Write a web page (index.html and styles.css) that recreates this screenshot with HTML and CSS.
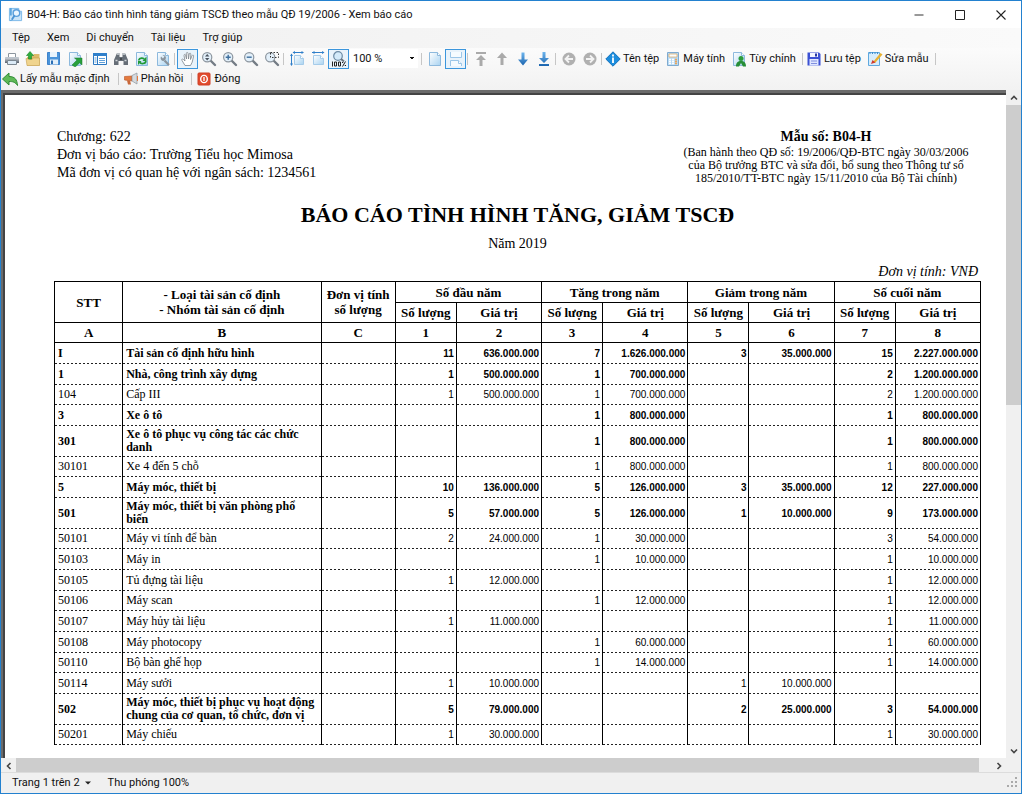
FILE: index.html
```html
<!DOCTYPE html>
<html lang="vi">
<head>
<meta charset="utf-8">
<title>B04-H: Báo cáo tình hình tăng giảm TSCĐ</title>
<link rel="stylesheet" href="styles.css">
</head>
<body>
<svg class="defs" width="0" height="0" aria-hidden="true">
  <defs>
    <linearGradient id="paper" x1="0" y1="0" x2="1" y2="1"><stop offset="0" stop-color="#fff"/><stop offset="1" stop-color="#a9d3f1"/></linearGradient>
    <linearGradient id="blue" x1="0" y1="0" x2="0" y2="1"><stop offset="0" stop-color="#6db5ee"/><stop offset="1" stop-color="#1b64ae"/></linearGradient>
    <linearGradient id="metal" x1="0" y1="0" x2="0" y2="1"><stop offset="0" stop-color="#dfe3e8"/><stop offset="1" stop-color="#59626d"/></linearGradient>
    <symbol id="page" viewBox="0 0 16 16"><path d="M2.500 1.500h8l3 3v10h-11z" fill="url(#paper)" stroke="#8db9dd"/><path d="M10.500 1.500v3h3" fill="#fff" stroke="#8db9dd"/></symbol>
    <symbol id="lens" viewBox="0 0 16 16"><path d="M9.500 9.500l4.500 4.500" stroke="#747c85" stroke-width="2.400" stroke-linecap="round"/><circle cx="6.200" cy="6.200" r="4.600" fill="#e3f0fa" stroke="#8d969f" stroke-width="1.200"/></symbol>
    <symbol id="round" viewBox="0 0 16 16"><circle cx="8" cy="8" r="6.500" fill="#b0b0b0"/><path d="M12 8H5M8 4.500L4.500 8 8 11.500" fill="none" stroke="#f3f3f3" stroke-width="1.800"/></symbol>
  </defs>
</svg>
<div class="window">
  <header class="titlebar">
    <svg class="app-icon" viewBox="0 0 16 16"><path d="M1.500 1.500h10v3h3v10h-13z" fill="#c9e4f8" stroke="#7ab8e8"/><path d="M3 1v8M3 14v1" stroke="#5aa5df" stroke-width="2"/><circle cx="9" cy="6.500" r="3.500" fill="#e9f6ff" stroke="#5a9fdc" stroke-width="1.500"/><path d="M7 9l-3 4.500" stroke="#4a94d4" stroke-width="2"/></svg>
    <h1 class="title">B04-H: Báo cáo tình hình tăng giảm TSCĐ theo mẫu QĐ 19/2006 - Xem báo cáo</h1>
    <div class="controls">
      <button aria-label="Thu nhỏ"><svg viewBox="0 0 12 12"><path d="M1.500 6h9" stroke="#333"/></svg></button>
      <button aria-label="Phóng to"><svg viewBox="0 0 12 12"><path d="M1.500 1.500h9v9h-9z" fill="none" stroke="#222"/></svg></button>
      <button aria-label="Đóng cửa sổ"><svg viewBox="0 0 12 12"><path d="M1.500 1.500l9 9M10.500 1.500l-9 9" stroke="#222" stroke-width="1.100"/></svg></button>
    </div>
  </header>
  <nav class="menu">
    <button>Tệp</button><button>Xem</button><button>Di chuyển</button><button>Tài liệu</button><button>Trợ giúp</button>
  </nav>
  <div class="tools">
    <div class="toolbar">
      <button class="tool" aria-label="In"><svg viewBox="0 0 16 16"><path d="M4.500 2.500h7v4h-7z" fill="#fff" stroke="#8d969f"/><path d="M1 6h14v6H1z" fill="url(#metal)"/><path d="M1.500 6.500h13" stroke="#bcc5cd"/><path d="M3.500 9.500h9v4h-9z" fill="#dcebf7" stroke="#7b8791"/></svg></button>
      <button class="tool" aria-label="Mở"><svg viewBox="0 0 16 16"><path d="M2 6l5-1 2-2h5.500v11.500H2z" fill="#dcbb6a"/><path d="M1 7.500l6 1 1-1.500h6.500v7.500H2z" fill="#f0d48d" stroke="#c49d4a" stroke-width=".6"/><path d="M3.500 8V4.500H1.500L5 .5l3.500 4h-2V8z" fill="#2fae3a" stroke="#168325" stroke-width=".6"/></svg></button>
      <button class="tool" aria-label="Lưu"><svg viewBox="0 0 16 16"><path d="M1.500 1.500h12v12h-12z" fill="#4a94da" stroke="#3f83cc"/><path d="M4 1h7v5H4z" fill="#e8f3fc"/><path d="M4 8.500h8v5H4z" fill="#e3eff9"/><path d="M5 9.500h2v3.500H5z" fill="#2c6fb5"/></svg></button>
      <button class="tool" aria-label="Xuất"><svg viewBox="0 0 16 16"><use href="#page"/><path d="M5 14l5-5-2.500-2H15v7l-2.300-2.300-4.500 4.300z" fill="#28a03b" stroke="#17772a" stroke-width=".5"/></svg></button>
      <span class="sep"></span>
      <button class="tool" aria-label="Bố cục"><svg viewBox="0 0 16 16"><path d="M1.500 2.500h13v11h-13z" fill="#fff" stroke="#2c78c2"/><path d="M1 2h14v3H1z" fill="#2f7fca"/><path d="M5.500 5v9" stroke="#2c78c2"/><path d="M2.500 7h2m-2 2h2m-2 2h2M7 7.500h6M7 9.500h6M7 11.500h6" stroke="#5f9fd8"/></svg></button>
      <button class="tool" aria-label="Tìm"><svg viewBox="0 0 16 16"><path d="M4 2h2.500v4h3V2H12l3 7v5h-4.500v-4h-5v4H1V9z" fill="#666e77"/><path d="M4 3h2.500M9.500 3H12M2.500 9.500h2M11.500 9.500h2" stroke="#d2d7dc" stroke-width="1.500"/><path d="M7 8h2" stroke="#222"/></svg></button>
      <button class="tool" aria-label="Làm mới"><svg viewBox="0 0 16 16"><use href="#page"/><path d="M4.500 9.500c1-3 5-3 6-1M12 10c-.5 3-5 3.500-6.500 1" fill="none" stroke="#219a37" stroke-width="1.600"/><path d="M12.500 5.500V10H8.500zM4 14v-4h3.500z" fill="#219a37"/></svg></button>
      <button class="tool" aria-label="Thiết lập"><svg viewBox="0 0 16 16"><use href="#page"/><path d="M9.500 9.500l4.500 4.500" stroke="#8a939c" stroke-width="2.200"/><path d="M6 5.500l2 2 1.500-2-2-1.500a3 3 0 0 1 3 4.500l-2 1.500A3 3 0 0 1 6 5.500z" fill="#8a939c"/></svg></button>
      <span class="sep"></span>
      <button class="tool on" aria-label="Kéo trang" aria-pressed="true"><svg viewBox="0 0 16 16"><path d="M5 14.500L2 9.500c-.8-1.500.8-2 1.500-1L5 10 4 4.500c0-1.500 1.500-1.300 1.700 0L6.500 8 6.300 2.500c0-1.400 1.700-1.400 1.800 0L8.500 8l.7-5c.2-1.300 1.700-1 1.600.2L10.500 8.500 12 4.700c.6-1.200 1.900-.7 1.600.5l-1.400 6-1.700 3.300z" fill="#fff" stroke="#7c848c" stroke-width=".8"/></svg></button>
      <button class="tool" aria-label="Thu phóng"><svg viewBox="0 0 16 16"><use href="#lens"/><path d="M4 5.500L6.200 3l2.200 2.500zM4 7h4.400L6.200 9.500z" fill="#4c5560"/></svg></button>
      <button class="tool" aria-label="Phóng lớn"><svg viewBox="0 0 16 16"><use href="#lens"/><path d="M3.700 6.200h5M6.200 3.700v5" stroke="#3e6f9d" stroke-width="1.400"/></svg></button>
      <button class="tool" aria-label="Thu bé"><svg viewBox="0 0 16 16"><use href="#lens"/><path d="M3.700 6.200h5" stroke="#3e6f9d" stroke-width="1.400"/></svg></button>
      <button class="tool" aria-label="Phóng vùng"><svg viewBox="0 0 16 16"><use href="#lens"/><path d="M6.500 1.500h8v5h-8z" fill="none" stroke="#333" stroke-dasharray="1.500 1.500"/></svg></button>
      <span class="sep"></span>
      <button class="tool" aria-label="Vừa trang"><svg viewBox="0 0 16 16"><path d="M5.500 4.500h6l3 3v6h-9z" fill="url(#paper)" stroke="#a5cbe9"/><path d="M11.500 4.500v3h3" fill="#fff" stroke="#a5cbe9"/><path d="M4 1.500h10M2.500 3v11" stroke="#2f7fca"/><path d="M6 0v3L3.500 1.500zM12.500 0v3L15 1.500zM1 5h3L2.500 2.500zM1 12.500h3L2.500 15z" fill="#2f7fca"/></svg></button>
      <button class="tool" aria-label="Vừa chiều rộng"><svg viewBox="0 0 16 16"><path d="M3.500 4.500h7l3 3v6h-10z" fill="url(#paper)" stroke="#a5cbe9"/><path d="M10.500 4.500v3h3" fill="#fff" stroke="#a5cbe9"/><path d="M2 1.500h12" stroke="#2f7fca"/><path d="M4.500 0v3L2 1.500zM12 0v3l2.500-1.500z" fill="#2f7fca"/></svg></button>
      <button class="tool on" aria-label="Cỡ thật" aria-pressed="true"><svg viewBox="0 0 16 16"><circle cx="7" cy="5" r="4.300" fill="#d3eafa" stroke="#6d8ba5" stroke-width="1.200"/><path d="M10 8l3 2.500" stroke="#6d7680" stroke-width="2"/><path d="M1.500 10.500v5M3.500 11h2v4h-2zM7.500 11h2v4h-2zM14.500 10.500l-3 5M11 11.500h1.200M13.800 14.500H15" fill="none" stroke="#222"/></svg></button>
      <select class="zoom" aria-label="Tỉ lệ thu phóng"><option>100 %</option></select>
      <span class="sep"></span>
      <button class="tool" aria-label="Một trang"><svg viewBox="0 0 16 16"><use href="#page"/></svg></button>
      <button class="tool on" aria-label="Liên tục" aria-pressed="true"><svg viewBox="0 0 16 16"><path d="M2.500 1v5.500h11V1M2.500 15V9.500h8l3 3V15" fill="#f5fbff" stroke="#9cc6e8"/><path d="M10.500 9.500v3h3" fill="#fff" stroke="#9cc6e8"/></svg></button>
      <span class="sep"></span>
      <button class="tool" aria-label="Trang đầu"><svg viewBox="0 0 16 16"><path d="M3 1h10v2H3zM6.500 15V9H3l5-5 5 5H9.500v6z" fill="#aaa"/></svg></button>
      <button class="tool" aria-label="Trang trước"><svg viewBox="0 0 16 16"><path d="M6.500 14V7H3l5-5.500L13 7H9.500v7z" fill="#aaa"/></svg></button>
      <button class="tool" aria-label="Trang sau"><svg viewBox="0 0 16 16"><path d="M6.500 1.500v7H3L8 14.500l5-6H9.500v-7z" fill="url(#blue)"/></svg></button>
      <button class="tool" aria-label="Trang cuối"><svg viewBox="0 0 16 16"><path d="M6.500 1v6H3l5 5 5-5H9.500V1zM3 13h10v2H3z" fill="url(#blue)"/></svg></button>
      <span class="sep"></span>
      <button class="tool" aria-label="Lùi"><svg viewBox="0 0 16 16"><use href="#round"/></svg></button>
      <button class="tool" aria-label="Tiến"><svg viewBox="0 0 16 16"><g transform="rotate(180 8 8)"><use href="#round"/></g></svg></button>
      <span class="sep"></span>
      <button class="tool labelled"><svg viewBox="0 0 16 16"><path d="M8 .8L15.200 8 8 15.200.8 8z" fill="#1c8ddd" stroke="#1473bd"/><path d="M8 6.500V12M8 3.500v2" stroke="#fff" stroke-width="1.800"/></svg>Tên tệp</button>
      <button class="tool labelled"><svg viewBox="0 0 16 16"><path d="M2.500 1.500h11v13h-11z" fill="#b9dbf5" stroke="#7fabd0"/><path d="M4 3h8v3H4z" fill="#f9fdff" stroke="#e2a75a" stroke-width=".7"/><path d="M4 8.500h2m1 0h2M4 10.500h2m1 0h2M4 12.500h2m1 0h2" stroke="#fff" stroke-width="1.300"/><path d="M10 8.500h2m-2 2h2M10 12.500h2" stroke="#e8a35a" stroke-width="1.300"/></svg>Máy tính</button>
      <button class="tool labelled"><svg viewBox="0 0 16 16"><use href="#page"/><circle cx="10" cy="7.500" r="2.500" fill="#2b9c3c"/><path d="M5 15.500c0-4 2-5.500 5-5.500s5 1.500 5 5.500h-3L10 12l-2 3.500z" fill="#278e36"/></svg>Tùy chỉnh</button>
      <span class="sep"></span>
      <button class="tool labelled"><svg viewBox="0 0 16 16"><path d="M1.500 1.500H13l1.500 1.500v11.500h-13z" fill="#3b50d3"/><path d="M4 2h8v4H4z" fill="#f2f5ff"/><path d="M9 2.500h2v3H9z" fill="#2639a5"/><path d="M3.500 8h9v6.500h-9z" fill="#dfe6ff"/><path d="M5 10h6m-6 2.500h6" stroke="#8190df"/></svg>Lưu tệp</button>
      <button class="tool labelled"><svg viewBox="0 0 16 16"><path d="M1.500 1.500h11v13h-11z" fill="#d6ecfc" stroke="#5fa9df"/><path d="M3 1v2m2.500-2v2M8 1v2m2.500-2v2" stroke="#3d8ccc"/><path d="M6 11l7.500-9 2 1.500L8 12z" fill="#e7b030"/><path d="M4 13l1.500-4 3 2.500z" fill="#d13b33"/></svg>Sửa mẫu</button>
      <span class="sep"></span>
    </div>
    <div class="toolbar">
      <button class="tool labelled"><svg viewBox="0 0 16 16"><path d="M7 2v3.500c6 0 8 3 8.500 9C13 11 11 10.500 7 10.500V14L.5 8z" fill="#5fb957" stroke="#2e8b34"/></svg>Lấy mẫu mặc định</button>
      <span class="sep second"></span>
      <button class="tool labelled"><svg viewBox="0 0 16 16"><path d="M1.500 5.500L9 5v5L1.500 9z" fill="#e47a3e" stroke="#b85225" stroke-width=".6"/><path d="M9 4.500L14 2v11l-5-3z" fill="#d6dade" stroke="#8c949b" stroke-width=".7"/><path d="M14.500 5v5" stroke="#e47a3e"/><path d="M4 9.500h3l1 4H5z" fill="#c9683a"/></svg>Phản hồi</button>
      <span class="sep second"></span>
      <button class="tool labelled"><svg viewBox="0 0 16 16"><rect x="2" y="2" width="12" height="12" rx="1" fill="#e14a2c" stroke="#cf3f24"/><ellipse cx="8" cy="8" rx="3.300" ry="3.600" fill="none" stroke="#fff" stroke-width="1.400"/><path d="M8 6v4" stroke="#fff" stroke-width="1.300"/></svg>Đóng</button>
    </div>
  </div>
  <div class="viewer">
    <main class="sheet">
      <div class="heading">
        <div class="unit">
          <p>Chương: 622</p>
          <p>Đơn vị báo cáo: Trường Tiểu học Mimosa</p>
          <p>Mã đơn vị có quan hệ với ngân sách: 1234561</p>
        </div>
        <div class="form">
          <p class="form-no">Mẫu số: B04-H</p>
          <p>(Ban hành theo QĐ số: 19/2006/QĐ-BTC ngày 30/03/2006<br>của Bộ trưởng BTC và sửa đổi, bổ sung theo Thông tư số<br>185/2010/TT-BTC ngày 15/11/2010 của Bộ Tài chính)</p>
        </div>
      </div>
      <h2 class="report-title">BÁO CÁO TÌNH HÌNH TĂNG, GIẢM TSCĐ</h2>
      <p class="year">Năm 2019</p>
      <p class="currency">Đơn vị tính: VNĐ</p>
      <table class="report">
        <colgroup><col class="c-code"><col class="c-name"><col class="c-unit"><col class="c-qty"><col class="c-val"><col class="c-qty"><col class="c-val"><col class="c-qty"><col class="c-val"><col class="c-qty"><col class="c-val"></colgroup>
        <thead>
          <tr><th rowspan="2">STT</th><th rowspan="2">- Loại tài sản cố định<br>- Nhóm tài sản cố định</th><th rowspan="2">Đơn vị tính<br>số lượng</th><th colspan="2">Số đầu năm</th><th colspan="2">Tăng trong năm</th><th colspan="2">Giảm trong năm</th><th colspan="2">Số cuối năm</th></tr>
          <tr><th>Số lượng</th><th>Giá trị</th><th>Số lượng</th><th>Giá trị</th><th>Số lượng</th><th>Giá trị</th><th>Số lượng</th><th>Giá trị</th></tr>
          <tr><th>A</th><th>B</th><th>C</th><th>1</th><th>2</th><th>3</th><th>4</th><th>5</th><th>6</th><th>7</th><th>8</th></tr>
        </thead>
        <tbody>
          <tr class="group"><td>I</td><td>Tài sản cố định hữu hình</td><td></td><td>11</td><td>636.000.000</td><td>7</td><td>1.626.000.000</td><td>3</td><td>35.000.000</td><td>15</td><td>2.227.000.000</td></tr>
          <tr class="group"><td>1</td><td>Nhà, công trình xây dựng</td><td></td><td>1</td><td>500.000.000</td><td>1</td><td>700.000.000</td><td></td><td></td><td>2</td><td>1.200.000.000</td></tr>
          <tr><td>104</td><td>Cấp III</td><td></td><td>1</td><td>500.000.000</td><td>1</td><td>700.000.000</td><td></td><td></td><td>2</td><td>1.200.000.000</td></tr>
          <tr class="group"><td>3</td><td>Xe ô tô</td><td></td><td></td><td></td><td>1</td><td>800.000.000</td><td></td><td></td><td>1</td><td>800.000.000</td></tr>
          <tr class="group tall"><td>301</td><td>Xe ô tô phục vụ công tác các chức<br>danh</td><td></td><td></td><td></td><td>1</td><td>800.000.000</td><td></td><td></td><td>1</td><td>800.000.000</td></tr>
          <tr><td>30101</td><td>Xe 4 đến 5 chỗ</td><td></td><td></td><td></td><td>1</td><td>800.000.000</td><td></td><td></td><td>1</td><td>800.000.000</td></tr>
          <tr class="group"><td>5</td><td>Máy móc, thiết bị</td><td></td><td>10</td><td>136.000.000</td><td>5</td><td>126.000.000</td><td>3</td><td>35.000.000</td><td>12</td><td>227.000.000</td></tr>
          <tr class="group tall"><td>501</td><td>Máy móc, thiết bị văn phòng phổ<br>biến</td><td></td><td>5</td><td>57.000.000</td><td>5</td><td>126.000.000</td><td>1</td><td>10.000.000</td><td>9</td><td>173.000.000</td></tr>
          <tr><td>50101</td><td>Máy vi tính để bàn</td><td></td><td>2</td><td>24.000.000</td><td>1</td><td>30.000.000</td><td></td><td></td><td>3</td><td>54.000.000</td></tr>
          <tr><td>50103</td><td>Máy in</td><td></td><td></td><td></td><td>1</td><td>10.000.000</td><td></td><td></td><td>1</td><td>10.000.000</td></tr>
          <tr><td>50105</td><td>Tủ đựng tài liệu</td><td></td><td>1</td><td>12.000.000</td><td></td><td></td><td></td><td></td><td>1</td><td>12.000.000</td></tr>
          <tr><td>50106</td><td>Máy scan</td><td></td><td></td><td></td><td>1</td><td>12.000.000</td><td></td><td></td><td>1</td><td>12.000.000</td></tr>
          <tr><td>50107</td><td>Máy hủy tài liệu</td><td></td><td>1</td><td>11.000.000</td><td></td><td></td><td></td><td></td><td>1</td><td>11.000.000</td></tr>
          <tr><td>50108</td><td>Máy photocopy</td><td></td><td></td><td></td><td>1</td><td>60.000.000</td><td></td><td></td><td>1</td><td>60.000.000</td></tr>
          <tr><td>50110</td><td>Bộ bàn ghế họp</td><td></td><td></td><td></td><td>1</td><td>14.000.000</td><td></td><td></td><td>1</td><td>14.000.000</td></tr>
          <tr><td>50114</td><td>Máy sưởi</td><td></td><td>1</td><td>10.000.000</td><td></td><td></td><td>1</td><td>10.000.000</td><td></td><td></td></tr>
          <tr class="group tall"><td>502</td><td>Máy móc, thiết bị phục vụ hoạt động<br>chung của cơ quan, tổ chức, đơn vị</td><td></td><td>5</td><td>79.000.000</td><td></td><td></td><td>2</td><td>25.000.000</td><td>3</td><td>54.000.000</td></tr>
          <tr><td>50201</td><td>Máy chiếu</td><td></td><td>1</td><td>30.000.000</td><td></td><td></td><td></td><td></td><td>1</td><td>30.000.000</td></tr>
        </tbody>
      </table>
    </main>
    <div class="vscroll">
      <button aria-label="Cuộn lên"><svg viewBox="0 0 8 8"><path d="M1 5.500l3-3 3 3" fill="none" stroke="#444" stroke-width="1.600"/></svg></button>
      <div class="track"><div class="thumb"></div></div>
      <button aria-label="Cuộn xuống"><svg viewBox="0 0 8 8"><path d="M1 2.500l3 3 3-3" fill="none" stroke="#444" stroke-width="1.600"/></svg></button>
    </div>
  </div>
  <div class="hscroll">
    <button aria-label="Cuộn trái"><svg viewBox="0 0 8 8"><path d="M5.500 1l-3 3 3 3" fill="none" stroke="#444" stroke-width="1.600"/></svg></button>
    <div class="thumb"></div>
    <button aria-label="Cuộn phải"><svg viewBox="0 0 8 8"><path d="M2.500 1l3 3-3 3" fill="none" stroke="#444" stroke-width="1.600"/></svg></button>
  </div>
  <footer class="status">
    <button>Trang 1 trên 2<svg viewBox="0 0 6 4"><path d="M0 .5h6L3 3.500z" fill="#222"/></svg></button>
    <span>Thu phóng 100%</span>
    <svg class="grip" viewBox="0 0 12 12"><path d="M8 0h2v2H8zM8 4h2v2H8zM4 4h2v2H4zM8 8h2v2H8zM4 8h2v2H4zM0 8h2v2H0z" fill="#aaa"/></svg>
  </footer>
</div>
</body>
</html>
```
FILE: styles.css
```css
* { box-sizing: border-box; }
body { margin: 0; font: 11px/16px Roboto, "Open Sans", sans-serif; color: #111; }
p, h1, h2 { margin: 0; font-weight: normal; }
button { margin: 0; padding: 0; border: 0; background: none; font: inherit; color: inherit; }
svg { display: block; flex: none; }
.defs { position: absolute; }

.window { display: flex; flex-direction: column; height: 100vh; border: 1px solid #2381cf; background: #f0f0f0; }
.titlebar { display: flex; align-items: center; height: 27px; padding-left: 7px; background: #fff; }
.app-icon { width: 15px; height: 15px; }
.title { flex: 1; margin-left: 4px; font-size: 11px; white-space: nowrap; }
.controls { display: flex; }
.controls button { display: flex; align-items: center; justify-content: center; width: 41px; height: 27px; }
.controls svg { width: 12px; height: 12px; }

.menu { display: flex; align-items: center; gap: 17px; height: 20px; padding-left: 11px; background: linear-gradient(90deg, #f0f0f0, #fafafa); }
.tools { padding-bottom: 1px; background: linear-gradient(#fbfbfb, #f2f2f2); }
.toolbar { display: flex; align-items: center; height: 21px; }
.toolbar + .toolbar { height: 20px; }
.tool { display: flex; flex: none; align-items: center; justify-content: center; gap: 2px; width: 21px; height: 20px; border: 1px solid transparent; white-space: nowrap; }
.tool svg { width: 16px; height: 16px; }
.tool.on { border-color: #3c96dc; background: #e9f3fb; }
.tool.labelled { width: auto; padding: 0 4px 0 0; }
.sep { flex: none; width: 1px; height: 12px; margin: 0 2px 0 1px; background: #c6c6c6; }
.sep.second { margin: 0 3px; }
.zoom { width: 68px; height: 19px; margin: 0 2px 0 1px; padding: 0 3px; border: 0; appearance: none; font: inherit; color: inherit;
  background: linear-gradient(45deg, transparent 50%, #111 50%) 59px 8px / 3px 3px no-repeat, linear-gradient(-45deg, transparent 50%, #111 50%) 62px 8px / 3px 3px no-repeat, #fff; }

.viewer { display: flex; flex: 1; min-height: 0; background: linear-gradient(#6b6b6b, #6b6b6b) 0 0 / calc(100% - 15px) 100% no-repeat; }
.sheet { flex: 1; min-width: 0; overflow: hidden; margin: 3px 0 0 2px; padding: 33px 25px 0 49px; border: solid #444; border-width: 2px 0 0 2px; background: #fff; color: #000; font-family: "Liberation Serif", serif; }
.heading { display: flex; justify-content: space-between; height: 68px; }
.unit { padding-left: 3px; font-size: 14px; line-height: 18px; }
.form { width: 310px; text-align: center; font-size: 12px; line-height: 13px; }
.form-no { font-size: 14px; font-weight: bold; line-height: 18px; }
.report-title { margin-top: 6px; font-size: 22px; font-weight: bold; line-height: 26px; text-align: center; }
.year { margin-top: 6px; font-size: 14px; line-height: 20px; text-align: center; }
.currency { margin-top: 9px; padding-right: 3px; font-size: 14px; font-style: italic; line-height: 18px; text-align: right; }

.report { width: 100%; table-layout: fixed; border-collapse: collapse; font-size: 12px; line-height: 13px; }
.c-code { width: 68px; }
.c-name { width: 198px; }
.c-unit { width: 74px; }
.c-qty { width: 61px; }
.c-val { width: 85px; }
.report th { height: 20px; padding: 0; border: 1px solid #000; font-size: 13px; line-height: 15px; white-space: nowrap; }
.report tr:first-child th { height: 21px; }
.report td { height: 21px; padding: 0 2px; border: solid #000; border-width: 0 1px; white-space: nowrap; text-align: right; font-family: "Liberation Sans Narrow", "Liberation Sans", sans-serif; font-size: 10px;
  background: repeating-linear-gradient(90deg, #222 0 2px, transparent 2px 4px) 0 100% / 100% 1px no-repeat; }
.report tbody tr:nth-child(3n) td { height: 20px; }
.report .tall td { height: 31px; }
.report td:nth-child(-n+2) { padding: 0 3px; text-align: left; font-family: "Liberation Serif", serif; font-size: 12px; }
.group td { font-weight: bold; }

.vscroll { display: flex; flex-direction: column; width: 15px; background: #f0f0f0; }
.vscroll button, .hscroll button { display: flex; align-items: center; justify-content: center; width: 15px; height: 15px; }
.vscroll svg, .hscroll svg { width: 8px; height: 8px; }
.track { flex: 1; }
.vscroll .thumb { height: 47%; background: #cdcdcd; }
.hscroll { display: flex; height: 14px; padding-right: 15px; }
.hscroll .thumb { flex: 1; margin-right: 12px; background: #cdcdcd; }
.status { display: flex; align-items: center; gap: 17px; height: 21px; padding: 0 2px 0 11px; border-top: 1px solid #dcdcdc; }
.status button { display: flex; align-items: center; gap: 5px; }
.status button svg { width: 6px; height: 4px; }
.grip { width: 12px; height: 12px; margin-left: auto; }
```
